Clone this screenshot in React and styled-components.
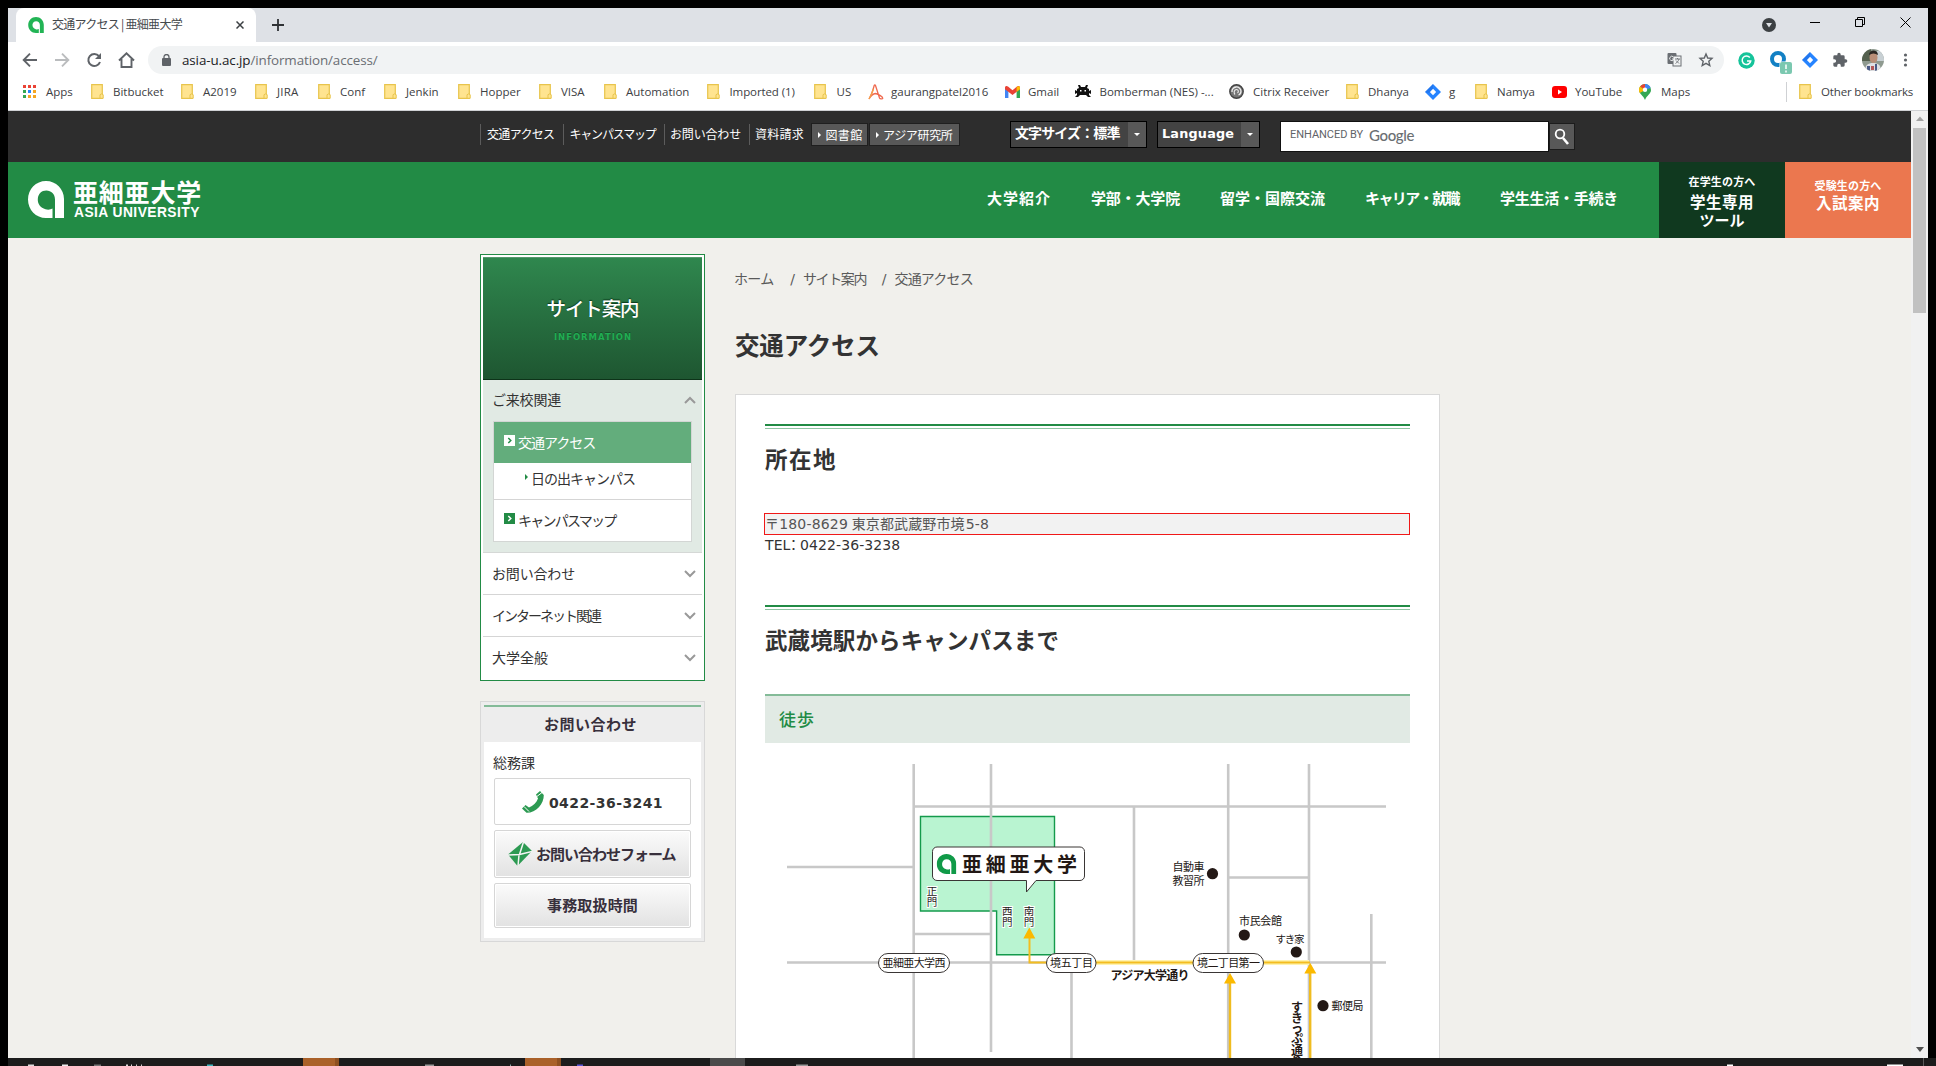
import React from "react";
import styled, { createGlobalStyle } from "styled-components";

const JP = `"Liberation Sans", "Noto Sans CJK JP", sans-serif`;
const UI = `"Open Sans", "Noto Sans CJK JP", sans-serif`;
const VERD = `"DejaVu Sans", "Noto Sans CJK JP", sans-serif`;

const GlobalStyle = createGlobalStyle`
  * { box-sizing: border-box; }
  html, body { margin: 0; padding: 0; background: #000; overflow: hidden; }
  ul { list-style: none; margin: 0; padding: 0; }
  h1, h2, h3, p { margin: 0; font-weight: inherit; }
  svg { display: block; flex: none; }
`;

/* Japanese label set to a given advance: the pitch is width / glyph count.
   $u lifts the glyphs inside their line, $x shifts their start. */
const Jp = styled.span`
  display: block;
  flex: none;
  white-space: nowrap;
  font-family: "Noto Sans CJK JP", sans-serif;
  width: ${(p) => p.$w}px;
  font-size: ${(p) => p.$s}px;
  line-height: ${(p) => p.$lh || 20}px;
  font-weight: ${(p) => p.$b || 400};
  color: ${(p) => p.$c || "inherit"};
  margin: ${(p) => -(p.$u ?? 1)}px 0 ${(p) => p.$u ?? 1}px;
  text-indent: ${(p) => p.$x ?? -1}px;
  letter-spacing: ${(p) => (p.$w / p.children.length - p.$s).toFixed(3)}px;
`;

const Screen = styled.div`
  width: 1936px;
  height: 1066px;
  padding: 8px 8px 0;
  background: #000;
  display: flex;
  flex-direction: column;
  font-family: ${JP};
  overflow: hidden;
`;

/* ---------- browser chrome ---------- */
const TabStrip = styled.div`
  height: 34px;
  flex: none;
  background: #dee1e6;
  display: flex;
`;
const Tab = styled.div`
  margin-left: 8px;
  width: 240px;
  height: 34px;
  background: #fff;
  border-radius: 8px 8px 0 0;
  display: flex;
  align-items: center;
  padding-left: 12px;
`;
const TabTitle = styled.div`
  width: 184px;
  margin-left: 8px;
  font: 12px/20px "Noto Sans CJK JP", sans-serif;
  letter-spacing: -0.72px;
  color: #45494d;
  white-space: nowrap;
  margin-top: -2px;
`;
const NewTab = styled.div`
  margin: 11px 0 0 16px;
  flex: 1;
`;
const WindowButtons = styled.div`
  display: flex;
  padding: 6px 17px 0 0;
  height: 34px;
  align-items: flex-start;
  width: 166px;
  justify-content: space-between;
`;
const Toolbar = styled.div`
  height: 36px;
  flex: none;
  background: #fff;
  display: flex;
  align-items: center;
  padding-left: 14px;
`;
const NavButtons = styled.div`
  width: 126px;
  display: flex;
  gap: 14px;
`;
const UrlBox = styled.div`
  width: 1576px;
  height: 28px;
  border-radius: 14px;
  background: #f1f3f4;
  display: flex;
  align-items: center;
  padding: 0 10px 0 14px;
`;
const Url = styled.div`
  flex: 1;
  margin-left: 11px;
  font: 13.4px/20px ${UI};
  letter-spacing: -0.1px;
  color: #6a6e73;
  b { font-weight: 400; color: #202124; }
`;
const Extensions = styled.div`
  display: flex;
  align-items: center;
  margin-left: 14px;
  gap: 14px;
  svg:nth-child(2) { margin-right: -5px; }
`;
const Bookmarks = styled.div`
  height: 33px;
  flex: none;
  background: #fff;
  border-bottom: 1px solid #cfd1d4;
  display: flex;
  align-items: center;
  padding: 0 0 5px 15px;
`;
const Bookmark = styled.div`
  width: ${(p) => p.$w}px;
  flex: none;
  display: flex;
  align-items: center;
`;
const BmIcon = styled.div`
  width: ${(p) => p.$w}px;
  flex: none;
`;
const BmText = styled.span`
  font: 11.5px/20px ${UI};
  letter-spacing: ${(p) => p.$ls || 0}px;
  color: #3c4043;
  white-space: nowrap;
`;
const BmDivider = styled.div`
  width: 1px;
  height: 20px;
  background: #cfd1d4;
  margin: 0 12px 0 0;
`;

/* ---------- page ---------- */
const Viewport = styled.div`
  flex: 1;
  min-height: 0;
  display: flex;
  background: #f1f0ec;
`;
const Page = styled.div`
  width: 1903px;
  overflow: hidden;
`;
const Scrollbar = styled.div`
  width: 17px;
  background: #f1f1f1;
  display: flex;
  flex-direction: column;
  align-items: center;
`;
const Thumb = styled.div`
  width: 13px;
  height: 185px;
  background: #c1c1c1;
  margin-top: 7px;
  margin-bottom: auto;
`;
const TopBar = styled.div`
  height: 51px;
  background: #2d2d2d;
  color: #fff;
  display: flex;
  padding: 10px 0 0 472px;
  align-items: flex-start;
`;
const TopLink = styled.div`
  width: ${(p) => p.$w}px;
  height: 21px;
  margin-top: 3px;
  border-left: 1px solid #5c5c5c;
  padding-left: 7px;
`;
const TopButton = styled.div`
  width: ${(p) => p.$w}px;
  height: 23px;
  margin: 2px 1px 0 0;
  border: 1px solid #1f1f1f;
  background: #585858;
  display: flex;
  align-items: center;
  gap: 6px;
  padding-left: 6px;
`;
const Select = styled.div`
  width: ${(p) => p.$w}px;
  height: 27px;
  margin-left: ${(p) => p.$ml}px;
  border: 1px solid #000;
  background: #434343;
  display: flex;
  justify-content: space-between;
  padding-left: 5px;
  line-height: 24px;
`;
const SelectArrow = styled.div`
  width: 18px;
  background: #585858;
  display: flex;
  align-items: center;
  justify-content: center;
`;
const LangText = styled.span`
  font: bold 12.8px/23px ${VERD};
  letter-spacing: 0.2px;
  margin-left: -1px;
`;
const SearchField = styled.div`
  width: 269px;
  height: 31px;
  margin-left: 20px;
  background: #fff;
  border: 1px solid #111;
  display: flex;
  align-items: center;
  padding: 0 0 3px 9px;
  color: #5f6368;
  font: 11px/20px Roboto, sans-serif;
  gap: 6px;
  letter-spacing: -0.05px;
`;
const Google = styled.span`
  font: 500 15px/20px Lato, sans-serif;
  letter-spacing: -0.35px;
  color: #6b6f73;
`;
const SearchButton = styled.div`
  width: 26px;
  height: 27px;
  margin-top: 2px;
  border: 1px solid #1c1c1c;
  background: #585858;
  display: flex;
  align-items: center;
  justify-content: center;
`;
const Header = styled.div`
  height: 76px;
  background: #228b45;
  color: #fff;
  display: flex;
`;
const Brand = styled.div`
  width: 979px;
  display: flex;
  gap: 10px;
  padding: 19px 0 0 20px;
`;
const BrandEn = styled.div`
  font: bold 13.8px/14px "Liberation Sans", sans-serif;
  letter-spacing: 0.45px;
  margin: 3px 0 0 0;
`;
const GlobalNav = styled.nav`
  width: 672px;
  display: flex;
  gap: 40px;
  padding-top: 26px;
`;
const Promo = styled.div`
  width: 126px;
  background: ${(p) => p.$bg};
  padding-top: ${(p) => p.$pt}px;
  display: flex;
  flex-direction: column;
  align-items: center;
`;
const Columns = styled.div`
  display: flex;
  padding: 16px 0 0 472px;
`;
const Aside = styled.aside`
  width: 225px;
  margin-right: 30px;
`;
const SideBox = styled.section`
  border: 1px solid #228b45;
  background: #fff;
  padding: 2px;
  height: 427px;
`;
const SideTitle = styled.div`
  height: 123px;
  background: linear-gradient(#2f874e, #1e5631);
  border-top: 1px solid #57976d;
  border-bottom: 1px solid #0d3319;
  display: flex;
  flex-direction: column;
  align-items: center;
  padding-top: 37px;
  color: #fff;
  text-shadow: 0 -1px 1px #0c3a1b;
`;
const SideTitleEn = styled.div`
  font: bold 8.5px/12px "DejaVu Sans", sans-serif;
  letter-spacing: 0.95px;
  color: #20ad52;
  text-shadow: 0 -1px 0 #17502b;
  margin: 8px 0 0 1px;
`;
const OpenGroup = styled.div`
  height: 173px;
  background: #e1eae4;
  border-bottom: 1px solid #d5d8d6;
  padding: 0 10px;
`;
const GroupRow = styled.div`
  height: ${(p) => p.$h || 42}px;
  display: flex;
  align-items: center;
  justify-content: space-between;
  color: #333;
  padding: ${(p) => (p.$flat ? "0 6px 0 10px" : "0 0 1px 0")};
  margin-right: ${(p) => (p.$flat ? 0 : -4)}px;
  border-bottom: ${(p) => (p.$line ? "1px solid #d5d5d5" : "0")};
`;
const SubList = styled.ul`
  border: 1px solid #d3d6d4;
  width: 199px;
  background: #fff;
`;
const SubItem = styled.li`
  height: ${(p) => p.$h}px;
  padding-left: ${(p) => p.$pl}px;
  padding-bottom: ${(p) => p.$pb || 0}px;
  display: flex;
  align-items: center;
  gap: 4px;
  background: ${(p) => p.$bg || "#fff"};
  color: ${(p) => p.$c || "#333"};
  border-bottom: ${(p) => (p.$line ? "1px solid #d5d5d5" : "0")};
  svg { margin-top: ${(p) => p.$up}px; }
`;
const ContactBox = styled.section`
  margin-top: 20px;
  height: 241px;
  border: 1px solid #d8d8d8;
  background: #ededed;
  padding: 3px;
`;
const ContactHead = styled.div`
  border-top: 2px solid #84bb98;
  height: 37px;
  display: flex;
  justify-content: center;
  padding-top: 8px;
  color: #38303c;
`;
const ContactBody = styled.div`
  background: #fff;
  height: 196px;
  padding: 11px 10px 0;
  color: #333;
  display: flex;
  flex-direction: column;
`;
const Button = styled.div`
  height: ${(p) => p.$h}px;
  margin-top: 5px;
  border: 1px solid #d6d6d6;
  border-radius: 2px;
  box-shadow: inset 0 0 0 1px #fff;
  background: ${(p) => (p.$plain ? "#fff" : "linear-gradient(#fbfbfb, #e2e2e2)")};
  display: flex;
  align-items: center;
  justify-content: center;
  gap: 5px;
  color: #38303c;
`;
const Phone = styled.span`
  font: bold 14px/20px ${VERD};
  letter-spacing: 0.42px;
  color: #333;
  margin-top: 3px;
`;
const Main = styled.main`
  width: 705px;
`;
const Crumbs = styled.div`
  display: flex;
  height: 21px;
  margin-top: 15px;
  color: #5a5a5a;
`;
const Slash = styled.span`
  font: 14px/20px ${VERD};
  width: ${(p) => p.$w}px;
  text-align: right;
  padding-right: 9px;
`;
const PageTitle = styled.h1`
  color: #333;
  margin: 40px 0 33px 1px;
`;
const Panel = styled.div`
  border: 1px solid #d9d9d9;
  background: #fff;
  height: 690px;
  padding: 29px 29px 0;
`;
const Heading = styled.h2`
  border-top: 2px solid #228b45;
  height: ${(p) => p.$h}px;
  color: #333;
`;
const HeadingInner = styled.div`
  margin-top: 2px;
  border-top: 1px solid #8ec4a2;
  padding: 15px 0 0 1px;
`;
const Address = styled.p`
  margin-left: -1px;
  width: 646px;
  height: 22px;
  border: 1px solid #f01818;
  background: #f2f2f2;
  color: #555;
  font: 14px/20px ${VERD};
  display: flex;
  white-space: pre;
  letter-spacing: 0.18px;
`;
const Tel = styled.p`
  font: 14px/20px ${VERD};
  letter-spacing: 0.1px;
  color: #333;
  height: 70px;
`;
const Colon = styled.span`
  display: inline-block;
  width: 9.5px;
  text-indent: -4px;
`;
const SubHeading = styled.h3`
  border-top: 2px solid #84bb98;
  background: #e1eae4;
  height: 49px;
  padding: 10px 0 0 15px;
  color: #228b45;
`;
const Taskbar = styled.div`
  height: 8px;
  flex: none;
  margin-right: -8px;
`;

const Folder = () => (
  <svg width="13" height="15" viewBox="0 0 13 15">
    <path d="M.7.7h10.6v13.6H.7z" fill="#ffe490" stroke="#e8c44c" strokeWidth="1.2" />
    <path d="M9 14.3v-3.6l1.6-.8 1.6.8v3.6z" fill="#ffe490" stroke="#e8c44c" strokeWidth="1" />
  </svg>
);
const Diamond = () => (
  <svg width="16" height="16" viewBox="0 0 16 16">
    <path d="M8 0l8 8-8 8-8-8z" fill="#2684ff" />
    <path d="M8 4.8L11.2 8 8 11.2 4.800 8z" fill="#fff" />
    <path d="M8 0v4.800L4 9 0 8z" fill="#1a5fd0" opacity=".35" />
  </svg>
);
const AsiaMark = ({ w, h, color }) => (
  <svg width={w} height={h} viewBox="0 0 36 37">
    <path
      fillRule="evenodd"
      fill={color}
      d="M18 0C8 0 0 8 0 18.500 0 29 8 37 18 37h6.500V27.600C22.600 28.600 20 29 17.500 28.200 12.500 27 9.500 23 9.800 18 10.200 13 13.500 9.600 18.300 9.600c5 0 8.700 3.600 8.700 8.800V37h9V18C36 8 28 0 18 0z"
    />
  </svg>
);
const Grid = () => (
  <svg width="13" height="13" viewBox="0 0 13 13">
    {["#ea4335", "#ea4335", "#ea4335", "#34a853", "#2684fc", "#f5a623", "#34a853", "#f5a623", "#f5a623"].map((c, i) => (
      <rect key={i} x={(i % 3) * 5} y={Math.floor(i / 3) * 5} width="3" height="3" fill={c} />
    ))}
  </svg>
);
const AIcon = () => (
  <svg width="16" height="16" viewBox="0 0 16 16" fill="none" strokeWidth="1.300">
    <path d="M7.500 9.500C5 9.800 3 11.500 1 15 3.500 11 5 6 6.200 1.500c.3-.9 1-.9 1.300 0L11.500 14c.4 1 3 1.300 3.300.3C15 13 10.500 10 7.500 9.500" stroke="#ef6a50" />
    <path d="M1 15c2-3 3.500-7 4.500-10" stroke="#f5a04a" />
  </svg>
);
const Gmail = () => (
  <svg width="15" height="12" viewBox="0 0 15 12">
    <path d="M0 1.500V12h3.400V5z" fill="#4285f4" />
    <path d="M15 1.500V12h-3.400V5z" fill="#34a853" />
    <path d="M0 1.600C0 0 1.700-.4 3 .6l4.500 3.600L12 .6c1.300-1 3-.6 3 1V3.300L7.500 9 0 3.300z" fill="#ea4335" />
    <path d="M11.600 1v4.900L15 3.300V1.600C15 0 13 0 11.600 1z" fill="#fbbc04" />
  </svg>
);
const Invader = () => (
  <svg width="16" height="13" viewBox="0 0 16 13" fill="#111">
    <path d="M3 0h2l1 2h4l1-2h2l-1 3 2 1v2l2-1v4l-2-1v2l2 2h-3l-2-2H5l-2 2H0l2-2V8L0 9V5l2 1V4l2-1z" />
    <path d="M5 5h1.500v1.500H5zM9.500 5H11v1.500H9.500z" fill="#fff" />
  </svg>
);
const Citrix = () => (
  <svg width="15" height="15" viewBox="0 0 15 15" fill="none" stroke="#444">
    <circle cx="7.500" cy="7.500" r="6.700" strokeWidth="1.400" fill="#777" />
    <path d="M3 8a4.500 4.500 0 019-1c0 2-1 3.500-2.500 4" strokeWidth="1.300" stroke="#eee" />
    <path d="M6 10.500c-1.500-1.500-1-5 1.500-5 2 0 2.500 2.500 1 3.500" strokeWidth="1.100" stroke="#eee" />
  </svg>
);
const YouTube = () => (
  <svg width="15" height="12" viewBox="0 0 15 12">
    <rect width="15" height="12" rx="3" fill="#f00" />
    <path d="M6 3.500v5L10 6z" fill="#fff" />
  </svg>
);
const MapsPin = () => (
  <svg width="12" height="16" viewBox="0 0 12 16">
    <path d="M6 0a6 6 0 00-6 6c0 4 4.500 5.500 6 10 1.500-4.500 6-6 6-10a6 6 0 00-6-6z" fill="#34a853" />
    <path d="M6 0a6 6 0 00-5 2.600L6 6z" fill="#ea4335" />
    <path d="M1 2.600A6 6 0 00.8 9L6 6z" fill="#fbbc04" />
    <path d="M6 0a6 6 0 015.500 4L6 6z" fill="#4285f4" />
    <circle cx="6" cy="5.800" r="2.200" fill="#fff" />
  </svg>
);

const BOOKMARKS = [
  [68, 23, "Apps", Grid], [90, 22, "Bitbucket"], [74, 22, "A2019"], [63, 22, "JIRA"], [66, 22, "Conf"],
  [74, 22, "Jenkin"], [81, 22, "Hopper"], [65, 22, "VISA"], [103, 22, "Automation"], [107, 22.500, "Imported (1)"],
  [54, 22.500, "US"], [136.500, 23, "gaurangpatel2016", AIcon], [70, 23.500, "Gmail", Gmail],
  [154.500, 25, "Bomberman (NES) -...", Invader], [117, 24, "Citrix Receiver", Citrix], [79, 22, "Dhanya"],
  [50, 24, "g", Diamond], [77, 22, "Namya"], [87, 23, "YouTube", YouTube], [147, 22, "Maps", MapsPin],
];
const BM_LS = { "Imported (1)": -0.1, JIRA: 0.2 };

const Chevron = ({ up }) => (
  <svg width="12" height="8" viewBox="0 0 12 8" fill="none" stroke="#999" strokeWidth="2">
    <path d={up ? "M1 7l5-5 5 5" : "M1 1l5 5 5-5"} />
  </svg>
);
const BoxArrow = ({ bg, fg }) => (
  <svg width="11" height="11" viewBox="0 0 11 11">
    <rect width="11" height="11" fill={bg} />
    <path d="M4.300 3l2.500 2.500L4.300 8" fill="none" stroke={fg} strokeWidth="1.500" />
  </svg>
);
const Tri = ({ c, w = 3, h = 6 }) => (
  <svg width={w} height={h} viewBox="0 0 3 6"><path d="M0 0l3 3-3 3z" fill={c} /></svg>
);

/* The street map is drawn in window coordinates, its view box starting at the panel's content corner */
const MapText = ({ x, y, w, s = 10.500, b = 400, children }) => (
  <text x={x} y={y} textLength={w} fontSize={s} fontWeight={b} fill="#231815" fontFamily="Noto Sans CJK JP, sans-serif">
    {children}
  </text>
);
const Stack = ({ x, ys, s = 10.500, b = 400, text, halo }) => (
  <g fontFamily="Noto Sans CJK JP, sans-serif" fontSize={s} fontWeight={b} textAnchor="middle" fill="#231815">
    {[...text].map((ch, i) => (
      <text key={i} x={x} y={ys[i]} stroke={halo ? "#fff" : "none"} strokeWidth="2" paintOrder="stroke">{ch}</text>
    ))}
  </g>
);
const StreetMap = () => (
  <svg width="645" height="315" viewBox="765 743 645 315">
    <g stroke="#c8c8c8" strokeWidth="2.600" fill="none">
      <path d="M787 867H913M914 934H991M787 962.500H1386M913 806.500H1386M1228 877.500H1309" />
      <path d="M913.700 764V1058M1134 806V962M1228.200 764V1058M1309 764V1058M1371.300 914V1058M1071.500 962V1058" />
    </g>
    <path d="M920.500 816.500H1054.500V954.700H996.600V911H920.500z" fill="#b9f4d1" stroke="#149a4c" strokeWidth="1.400" />
    <path d="M991 764V1052" stroke="#c8c8c8" strokeWidth="2.600" />
    <path d="M1096 962.500H1309" stroke="#fff3b0" strokeWidth="5" />
    <path d="M1029.500 936V962.500H1310" fill="none" stroke="#f3bd20" strokeWidth="2" />
    <path d="M1230 980V1058M1310.200 972V1058" stroke="#f0bc20" strokeWidth="2.400" />
    <path d="M1029.300 927.500l6 11h-12zM1230 973l6 10.500h-12zM1310.300 963l6 10.500h-12z" fill="#fbb900" />
    <g fill="#fff" stroke="#3a3635" strokeWidth="1">
      <path d="M937 847H1080a4.500 4.500 0 014.500 4.500V876a4.500 4.500 0 01-4.500 4.500H1036L1026.500 892V880.500H937a4.500 4.500 0 01-4.500-4.500V851.500A4.500 4.500 0 01937 847z" />
      <rect x="878.500" y="953.500" width="71" height="19" rx="9.500" />
      <rect x="1046.500" y="953.500" width="49.500" height="19" rx="9.500" />
      <rect x="1193" y="953.500" width="70.500" height="19" rx="9.500" />
    </g>
    <g transform="translate(936.500 854)"><AsiaMark w={20} h={20} color="#109a48" /></g>
    <MapText x={962} y={871.500} w={115} s={20} b={700}>亜細亜大学</MapText>
    <MapText x={882.500} y={966.500} w={63} s={11}>亜細亜大学西</MapText>
    <MapText x={1050} y={966.500} w={43} s={11}>境五丁目</MapText>
    <MapText x={1197} y={966.500} w={63} s={11}>境二丁目第一</MapText>
    <MapText x={1172.500} y={871} w={32} s={11}>自動車</MapText>
    <MapText x={1172.500} y={885} w={32} s={11}>教習所</MapText>
    <MapText x={1239} y={925} w={43} s={11}>市民会館</MapText>
    <MapText x={1275.500} y={942.500} w={29}>すき家</MapText>
    <MapText x={1331.500} y={1010} w={32} s={11}>郵便局</MapText>
    <MapText x={1110.500} y={980} w={79} s={12} b={700}>アジア大学通り</MapText>
    <Stack x={932} ys={[894.500, 905.500]} text="正門" halo />
    <Stack x={1007.300} ys={[914.500, 925.500]} text="西門" halo />
    <Stack x={1029} ys={[914.500, 925.500]} text="南門" halo />
    <Stack x={1297} ys={[1012, 1023, 1033, 1043, 1054.500, 1066]} s={12} b={700} text="すきっぷ通り" />
    <g fill="#231815">
      {[[1212.500, 873.700], [1244.300, 935], [1296.300, 952], [1323, 1005.700]].map(([x, y]) => (
        <circle key={x} cx={x} cy={y} r="5.600" />
      ))}
    </g>
  </svg>
);

const TASK_BITS = [
  [20, 6, "#ddd"], [54, 6, "#eee"], [86, 7, "#777"], [118, 2, "#ddd"], [123, 1, "#ddd"], [128, 1, "#ccc"], [133, 1, "#ccc"],
  [199, 6, "#3ab5bd"], [417, 9, "#9a9a9a"], [502, 1, "#8aa"], [569, 6, "#5a55d8"], [788, 12, "#999"], [1719, 6, "#fff"], [1879, 16, "#fff"],
];

export default function App() {
  return (
    <Screen>
      <GlobalStyle />
      <TabStrip>
        <Tab>
          <AsiaMark w={16} h={16} color="#22b455" />
          <TabTitle>交通アクセス | 亜細亜大学</TabTitle>
          <svg width="8" height="8" viewBox="0 0 8 8" stroke="#3c4043" strokeWidth="1.500"><path d="M.5.5l7 7M7.500.5l-7 7" /></svg>
        </Tab>
        <NewTab>
          <svg width="12" height="12" viewBox="0 0 12 12" stroke="#2f3235" strokeWidth="1.800"><path d="M6 0v12M0 6h12" /></svg>
        </NewTab>
        <WindowButtons>
          <svg width="14" height="20" viewBox="0 0 14 20">
            <circle cx="7" cy="11" r="7" fill="#3c4043" /><path d="M4 9h6l-3 4.500z" fill="#dee1e6" />
          </svg>
          <svg width="10" height="20" viewBox="0 0 10 20"><path d="M0 8.500h10" stroke="#000" /></svg>
          <svg width="11" height="20" viewBox="0 0 11 20" fill="none" stroke="#000">
            <path d="M.5 5.500h7v7h-7zM2.500 5.500v-2h7v7h-2" />
          </svg>
          <svg width="11" height="20" viewBox="0 0 11 20" stroke="#000"><path d="M.5 3.500l10 10M10.500 3.500l-10 10" /></svg>
        </WindowButtons>
      </TabStrip>
      <Toolbar>
        <NavButtons>
          <svg width="18" height="16" viewBox="0 0 18 16" fill="none" stroke="#5f6368" strokeWidth="1.900"><path d="M15 8H2M8 1.700L1.700 8 8 14.300" /></svg>
          <svg width="18" height="16" viewBox="0 0 18 16" fill="none" stroke="#babcbe" strokeWidth="1.900"><path d="M1 8h13M8 1.700L14.300 8 8 14.300" /></svg>
          <svg width="18" height="16" viewBox="0 0 18 16" fill="none" stroke="#5f6368" strokeWidth="2">
            <path d="M13 4.200A6 6 0 1014 10" /><path d="M15 1v6h-6z" fill="#5f6368" stroke="none" />
          </svg>
          <svg width="18" height="16" viewBox="0 0 18 16" fill="none" stroke="#5f6368" strokeWidth="1.900"><path d="M1 8.500L8.500 1.300 16 8.500M3.500 7v8h10V7" /></svg>
        </NavButtons>
        <UrlBox>
          <svg width="9" height="12" viewBox="0 0 9 12"><rect y="4" width="9" height="8" rx="1" fill="#5f6368" /><path d="M2 5V3a2.500 2.500 0 015 0v2" fill="none" stroke="#5f6368" strokeWidth="1.300" /></svg>
          <Url><b>asia-u.ac.jp</b>/information/access/</Url>
          <svg width="47" height="16" viewBox="0 0 47 16">
            <rect x=".5" y="1" width="9" height="11" rx="1" fill="#6a6e73" />
            <rect x="6" y="4" width="8" height="10" fill="#f1f3f4" stroke="#6a6e73" />
            <path d="M8 7h5M10.500 6v1M12 7c-.5 2-2 3.500-3.500 4.500M9 8.500l3 3" stroke="#6a6e73" fill="none" strokeWidth=".9" />
            <path d="M6.500 5A2.200 2.200 0 107 7H5" stroke="#f1f3f4" fill="none" strokeWidth=".9" />
            <path d="M39 2l1.700 4 4.300.4-3.200 2.900 1 4.200L39 11.300l-3.800 2.200 1-4.200L33 6.400 37.300 6z" fill="none" stroke="#5f6368" strokeWidth="1.400" />
          </svg>
        </UrlBox>
        <Extensions>
          <svg width="17" height="17" viewBox="0 0 17 17"><circle cx="8.500" cy="8.500" r="8.200" fill="#15c39a" /><path d="M11.800 5.500A4.300 4.300 0 1012.700 9H9" fill="none" stroke="#fff" strokeWidth="1.500" /></svg>
          <svg width="24" height="28" viewBox="0 0 24 28">
            <circle cx="9" cy="13" r="6" fill="none" stroke="#1280c4" strokeWidth="4" />
            <rect x="10.500" y="15.500" width="13" height="13" fill="#fff" />
            <rect x="11" y="16" width="12" height="12" rx="2" fill="#7bc8b0" /><path d="M17 18.500v4.500M17 24.500v2" stroke="#fff" strokeWidth="1.500" />
          </svg>
          <Diamond />
          <svg width="16" height="16" viewBox="0 0 24 24" fill="#5f6368"><path d="M20.500 11H19V7a2 2 0 00-2-2h-4V3.500a2.500 2.500 0 00-5 0V5H4a2 2 0 00-2 2v3.800h1.500a2.700 2.700 0 010 5.400H2V20c0 1.100.9 2 2 2h3.800v-1.500a2.700 2.700 0 015.400 0V22H17a2 2 0 002-2v-4h1.500a2.500 2.500 0 000-5z" /></svg>
          <svg width="22" height="22" viewBox="0 0 22 22">
            <clipPath id="av"><circle cx="11" cy="11" r="11" /></clipPath>
            <g clipPath="url(#av)">
              <rect width="22" height="22" fill="#8f9a90" /><path d="M0 0h9v12H0z" fill="#55614f" /><path d="M15 2h7v10h-7z" fill="#c8d0d4" />
              <ellipse cx="11.500" cy="8.500" rx="4" ry="5.500" fill="#b98e77" /><path d="M7 6c0-6 9-6 9 0-3-2-6-2-9 0z" fill="#2b2622" />
              <path d="M3 22c0-6 3-8 8-8s8 2 8 8z" fill="#dfe0e4" /><path d="M5 17h3v5H5zM13 15h2v7h-2z" fill="#4a5a86" /><path d="M9 17h3v4H9z" fill="#b5585a" />
            </g>
          </svg>
          <svg width="13" height="16" viewBox="0 0 13 16" fill="#5f6368"><circle cx="7.500" cy="3" r="1.600" /><circle cx="7.500" cy="8" r="1.600" /><circle cx="7.500" cy="13" r="1.600" /></svg>
        </Extensions>
      </Toolbar>
      <Bookmarks>
        {BOOKMARKS.map(([w, iw, label, Icon = Folder]) => (
          <Bookmark key={label} $w={w}>
            <BmIcon $w={iw}><Icon /></BmIcon>
            <BmText $ls={BM_LS[label]}>{label}</BmText>
          </Bookmark>
        ))}
        <BmDivider />
        <BmIcon $w={22}><Folder /></BmIcon>
        <BmText $ls={-0.15}>Other bookmarks</BmText>
      </Bookmarks>

      <Viewport>
        <Page>
          <TopBar>
            <TopLink $w={82.500}><Jp $u={0} $w={68} $s={12}>交通アクセス</Jp></TopLink>
            <TopLink $w={101}><Jp $u={0} $w={86.500} $s={12}>キャンパスマップ</Jp></TopLink>
            <TopLink $w={85}><Jp $u={0} $x={-1.5} $w={71} $s={12}>お問い合わせ</Jp></TopLink>
            <TopLink $w={62.500}><Jp $u={0} $x={-1.5} $w={49} $s={12}>資料請求</Jp></TopLink>
            <TopButton $w={57}><Tri c="#fff" /><Jp $u={0} $x={-1.5} $w={37} $s={12}>図書館</Jp></TopButton>
            <TopButton $w={91}><Tri c="#fff" /><Jp $u={0} $x={-2} $w={70} $s={12}>アジア研究所</Jp></TopButton>
            <Select $w={137} $ml={49}>
              <Jp $w={105} $s={14} $lh={23} $b={700}>文字サイズ：標準</Jp>
              <SelectArrow><svg width="6" height="3" viewBox="0 0 6 3"><path d="M0 0h6L3 3z" fill="#fff" /></svg></SelectArrow>
            </Select>
            <Select $w={103} $ml={10}>
              <LangText>Language</LangText>
              <SelectArrow><svg width="6" height="3" viewBox="0 0 6 3"><path d="M0 0h6L3 3z" fill="#fff" /></svg></SelectArrow>
            </Select>
            <SearchField>ENHANCED BY<Google>Google</Google></SearchField>
            <SearchButton>
              <svg width="16" height="18" viewBox="0 0 16 18" fill="none" stroke="#fff"><circle cx="6" cy="6" r="4.300" strokeWidth="1.800" /><path d="M9 10l5 6" strokeWidth="2.600" /></svg>
            </SearchButton>
          </TopBar>
          <Header>
            <Brand>
              <AsiaMark w={36} h={37} color="#fff" />
              <div>
                <Jp $u={2} $w={129} $s={25} $lh={24} $b={700}>亜細亜大学</Jp>
                <BrandEn>ASIA UNIVERSITY</BrandEn>
              </div>
            </Brand>
            <GlobalNav>
              <Jp $u={0} $x={0} $w={64} $s={15} $b={700}>大学紹介</Jp>
              <Jp $u={0} $x={0} $w={89} $s={15} $b={700}>学部・大学院</Jp>
              <Jp $u={0} $x={0} $w={105} $s={15} $b={700}>留学・国際交流</Jp>
              <Jp $u={0} $x={0} $w={94} $s={15} $b={700}>キャリア・就職</Jp>
              <Jp $u={0} $x={1} $w={118} $s={15} $b={700}>学生生活・手続き</Jp>
            </GlobalNav>
            <Promo $bg="#10391f" $pt={10}>
              <Jp $x={0} $w={67} $s={11} $lh={20} $b={700}>在学生の方へ</Jp>
              <Jp $x={0} $w={64} $s={15.500} $lh={20} $b={700}>学生専用</Jp>
              <Jp $x={0} $w={45} $s={15} $lh={17} $b={700}>ツール</Jp>
            </Promo>
            <Promo $bg="#eb774f" $pt={14}>
              <Jp $u={0} $x={0} $w={67} $s={11} $lh={18} $b={700}>受験生の方へ</Jp>
              <Jp $x={0} $w={64} $s={15.500} $lh={18} $b={700}>入試案内</Jp>
            </Promo>
          </Header>
          <Columns>
            <Aside>
              <SideBox>
                <SideTitle>
                  <Jp $x={0} $w={92} $s={19.500} $lh={28} $b={500}>サイト案内</Jp>
                  <SideTitleEn>INFORMATION</SideTitleEn>
                </SideTitle>
                <OpenGroup>
                  <GroupRow $h={41}><Jp $w={69} $s={14}>ご来校関連</Jp><Chevron up /></GroupRow>
                  <SubList>
                    <SubItem $h={41} $pl={10} $bg="#63ad7c" $c="#fff" $up={-4}><BoxArrow bg="#fff" fg="#228b45" /><Jp $w={78} $s={14}>交通アクセス</Jp></SubItem>
                    <SubItem $h={37} $pl={31} $pb={3} $line $up={-5}><Tri c="#228b45" /><Jp $u={2} $w={104} $s={14}>日の出キャンパス</Jp></SubItem>
                    <SubItem $h={41} $pl={10} $up={-4}><BoxArrow bg="#228b45" fg="#fff" /><Jp $w={98} $s={14}>キャンパスマップ</Jp></SubItem>
                  </SubList>
                </OpenGroup>
                <GroupRow $flat $line><Jp $w={83} $s={14}>お問い合わせ</Jp><Chevron /></GroupRow>
                <GroupRow $flat $line><Jp $w={108} $s={14}>インターネット関連</Jp><Chevron /></GroupRow>
                <GroupRow $flat><Jp $w={56} $s={14}>大学全般</Jp><Chevron /></GroupRow>
              </SideBox>
              <ContactBox>
                <ContactHead><Jp $x={-2} $w={93} $s={15} $b={700}>お問い合わせ</Jp></ContactHead>
                <ContactBody>
                  <Jp $w={42} $s={14}>総務課</Jp>
                  <Button $plain $h={47}>
                    <svg width="22" height="22" viewBox="0 0 22 22">
                      <path d="M14 3.500L18 0l3.800 4C22 13 14 22 4.500 21.800L0 17.500 3.500 14l3.500 2.500C11 15 14.500 11.500 16 7.500z" fill="#2c9a52" />
                      <path d="M14.500 5.800L20 1.500M2 15.500l5 5" stroke="#fff" strokeWidth="1" />
                    </svg>
                    <Phone>0422-36-3241</Phone>
                  </Button>
                  <Button $h={48}>
                    <svg width="24" height="24" viewBox="0 0 24 24">
                      <path d="M15 0l9 9-14.500 15L0 12.500z" fill="#2c9a52" />
                      <path d="M0 13l11.500-.5L15.500 0M11.500 12.500L24 9.500M11 13l-1 11" stroke="#f4f4f4" strokeWidth="1.500" fill="none" />
                    </svg>
                    <Jp $u={0} $w={140} $s={15} $b={700}>お問い合わせフォーム</Jp>
                  </Button>
                  <Button $h={45}><Jp $x={0} $w={91} $s={15} $b={700}>事務取扱時間</Jp></Button>
                </ContactBody>
              </ContactBox>
            </Aside>
            <Main>
              <Crumbs>
                <Jp $w={40} $s={14}>ホーム</Jp><Slash $w={29}>/</Slash>
                <Jp $w={63} $s={14}>サイト案内</Jp><Slash $w={28.500}>/</Slash>
                <Jp $w={79} $s={14}>交通アクセス</Jp>
              </Crumbs>
              <PageTitle><Jp $w={146} $s={24.500} $lh={32} $b={700}>交通アクセス</Jp></PageTitle>
              <Panel>
                <Heading $h={89}><HeadingInner><Jp $u={2} $w={72} $s={22.500} $lh={32} $b={700}>所在地</Jp></HeadingInner></Heading>
                <Address>〒180-8629 <Jp $w={113} $s={14}>東京都武蔵野市境</Jp>5-8</Address>
                <Tel>TEL<Colon>：</Colon>0422-36-3238</Tel>
                <Heading $h={89}><HeadingInner><Jp $u={2} $w={294} $s={22.500} $lh={32} $b={700}>武蔵境駅からキャンパスまで</Jp></HeadingInner></Heading>
                <SubHeading><Jp $w={36} $s={17} $lh={28} $b={500}>徒歩</Jp></SubHeading>
                <StreetMap />
              </Panel>
            </Main>
          </Columns>
        </Page>
        <Scrollbar>
          <svg width="8" height="10" viewBox="0 0 8 10"><path d="M0 10l4-4.500L8 10z" fill="#a3a3a3" /></svg>
          <Thumb />
          <svg width="8" height="13" viewBox="0 0 8 13"><path d="M0 2l4 5 4-5z" fill="#505050" /></svg>
        </Scrollbar>
      </Viewport>
      <Taskbar>
        <svg width="1928" height="8" viewBox="0 0 1928 8">
          <rect width="1928" height="8" fill="#1c1c1c" />
          <path d="M295 0h36v8h-36zM517 0h36v8h-36z" fill="#aa6129" />
          <path d="M327 0h4v8h-4zM549 0h4v8h-4z" fill="#8f5020" />
          <path d="M702 0h35v8h-35z" fill="#4b4b4b" />
          <path d="M1915.500 0v8" stroke="#5a5a5a" />
          {TASK_BITS.map(([x, w, c]) => <rect key={x} x={x} y="6.500" width={w} height="1.500" fill={c} />)}
        </svg>
      </Taskbar>
    </Screen>
  );
}
